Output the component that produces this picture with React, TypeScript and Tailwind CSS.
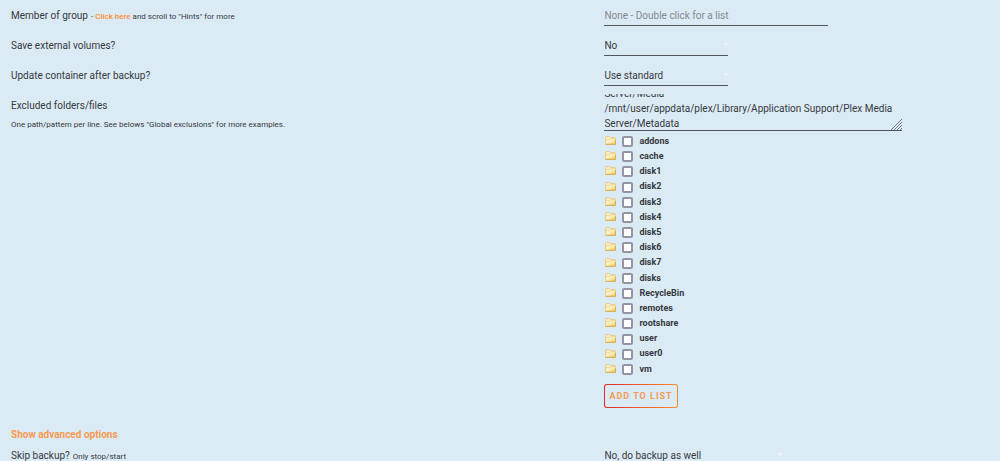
import { useLayoutEffect, useRef, type ReactNode } from "react";

const folders = [
  "addons", "cache", "disk1", "disk2", "disk3", "disk4", "disk5", "disk6",
  "disk7", "disks", "RecycleBin", "remotes", "rootshare", "user", "user0", "vm",
];

const excluded = [
  "/mnt/user/appdata/plex/Library/Application Support/Plex Media Server/Cache",
  "/mnt/user/appdata/plex/Library/Application Support/Plex Media Server/Media",
  "/mnt/user/appdata/plex/Library/Application Support/Plex Media Server/Metadata",
].join("\n");

function Row({ label, children }: { label: ReactNode; children: ReactNode }) {
  return (
    <div className="grid h-[30px] grid-cols-[3fr_2fr] items-start">
      <div className="flex h-[30px] items-baseline gap-[3px] leading-[31px]">{label}</div>
      <div className="flex items-start">{children}</div>
    </div>
  );
}

function Select({ id, value, width }: { id: string; value: string; width: string }) {
  return (
    <div className={`relative ${width}`}>
      <select
        id={id}
        defaultValue={value}
        className="block h-[26px] w-full appearance-none border-b border-[#53575c] bg-transparent pt-[6px] outline-none"
      >
        <option>{value}</option>
      </select>
      <svg className="pointer-events-none absolute top-[13px] right-0 h-1 w-1" viewBox="0 0 4 4" aria-hidden="true">
        <path d="M0 0h4L2 4z" fill="#f2f2f2" />
      </svg>
    </div>
  );
}

function FolderIcon() {
  return (
    <svg className="mb-[2px] ml-px h-[9px] w-[11px] shrink-0" viewBox="0 0 11 9" aria-hidden="true">
      <defs>
        <linearGradient id="folder" x1="0" y1="0" x2="1" y2="1">
          <stop offset="0" stopColor="#fffae0" />
          <stop offset="0.5" stopColor="#faeeb6" />
          <stop offset="1" stopColor="#e9c452" />
        </linearGradient>
      </defs>
      <path d="M.5 8V1L1 .5h3.500l1 1h4.500l.5.500V8z" fill="#f8ecc2" stroke="#e3c47c" strokeWidth=".8" />
      <path d="M.5 8.300.8 3.700h4l1-1h4.700v5.600z" fill="url(#folder)" stroke="#e6c678" strokeWidth=".6" />
      <path d="M.5 8.400h10V4" fill="none" stroke="#d3a648" strokeWidth=".8" />
    </svg>
  );
}

export default function App() {
  const area = useRef<HTMLTextAreaElement>(null);
  useLayoutEffect(() => {
    const el = area.current;
    if (el) el.scrollTop = el.scrollHeight - el.clientHeight - 1;
  }, []);

  return (
    <main className="h-screen overflow-hidden bg-[#dbebf6] pl-[11px] font-['Roboto','Noto_Sans',sans-serif] text-[10px] text-[#36393d]">
      <Row
        label={
          <>
            <label htmlFor="group">Member of group</label>
            <span className="text-[8px]">
              - <a href="#hints" className="font-medium text-[#ff8c2f]">Click here</a> and scroll to "Hints" for more
            </span>
          </>
        }
      >
        <input
          id="group"
          placeholder="None - Double click for a list"
          className="h-[26px] w-56 border-b border-[#53575c] bg-transparent pt-[6px] outline-none placeholder:text-[#83898f]"
        />
      </Row>
      <Row label={<label htmlFor="volumes">Save external volumes?</label>}>
        <Select id="volumes" value="No" width="w-[124px]" />
      </Row>
      <Row label={<label htmlFor="update">Update container after backup?</label>}>
        <Select id="update" value="Use standard" width="w-[124px]" />
      </Row>

      <div className="grid grid-cols-[3fr_2fr] items-start">
        <div>
          <label htmlFor="excluded" className="block h-[30px] leading-[31px]">Excluded folders/files</label>
          <p className="text-[8px] leading-[10px]">
            One path/pattern per line. See belows "Global exclusions" for more examples.
          </p>
        </div>
        <div className="pt-1">
          <div className="relative w-[298px]">
            <textarea
              ref={area}
              id="excluded"
              defaultValue={excluded}
              className="block h-[37px] w-full resize-none overflow-hidden border-b border-[#53575c] bg-transparent leading-[15px] outline-none"
            />
            <svg className="pointer-events-none absolute right-0 bottom-px h-[11px] w-[11px]" viewBox="0 0 11 11" aria-hidden="true">
              <path d="M0 11 11 0M3 11l8-8M6 11l5-5M9 11l2-2" stroke="#73787d" fill="none" />
            </svg>
          </div>
          <ul className="flex h-[246px] flex-col pt-[3px] text-[9px] font-bold">
            {folders.map((name) => (
              <li key={name} className="flex flex-1 items-center">
                <label className="flex items-center">
                  <FolderIcon />
                  <input
                    type="checkbox"
                    className="mr-[6px] ml-[6px] h-[11px] w-[11px] appearance-none rounded-[2px] border-2 border-[#9694a4] bg-white"
                  />
                  {name}
                </label>
              </li>
            ))}
          </ul>
          <button
            type="button"
            className="mt-[7px] h-6 rounded-[3px] border border-transparent px-1 pt-px text-[9px] font-bold tracking-[1px] text-[#f29b57] uppercase [background:linear-gradient(#dbebf6,#dbebf6)_padding-box,linear-gradient(90deg,#e22828,#ff8c2f)_border-box]"
          >
            Add to list
          </button>
        </div>
      </div>

      <div className="mt-[22px] flex leading-[10px]">
        <a href="#advanced" className="font-bold text-[#f89a50]">Show advanced options</a>
      </div>
      <Row
        label={
          <>
            <label htmlFor="skip">Skip backup?</label>
            <span className="text-[8px]">Only stop/start</span>
          </>
        }
      >
        <Select id="skip" value="No, do backup as well" width="w-[178px]" />
      </Row>
    </main>
  );
}
